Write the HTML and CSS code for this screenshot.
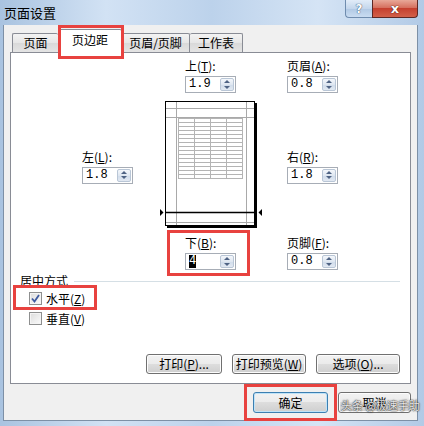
FILE: index.html
```html
<!DOCTYPE html>
<html lang="zh-CN">
<head>
    <meta charset="UTF-8">
    <title>页面设置</title>
    <link rel="stylesheet" href="styles.css">
</head>
<body>
    <div class="window">
        <div class="titlebar">
            <span class="title">页面设置</span>
            <div class="caption">
                <span class="cap-btn help">?</span>
                <span class="cap-btn close">x</span>
            </div>
        </div>
        <div class="client">
            <div class="tabs">
                <span class="tab tab-page">页面</span>
                <span class="tab tab-margin active hl">页边距</span>
                <span class="tab tab-head">页眉/页脚</span>
                <span class="tab tab-sheet">工作表</span>
            </div>
            <div class="panel">
                <div class="margins">
                    <div class="pos-top">
                        <div class="field">
                            <span class="field-label">上(<u>T</u>):</span>
                            <div class="spin"><span class="spin-value">1.9</span><span class="spin-btns"><i class="up"></i><i class="down"></i></span></div>
                        </div>
                    </div>
                    <div class="pos-header">
                        <div class="field">
                            <span class="field-label">页眉(<u>A</u>):</span>
                            <div class="spin"><span class="spin-value">0.8</span><span class="spin-btns"><i class="up"></i><i class="down"></i></span></div>
                        </div>
                    </div>
                    <div class="pos-left">
                        <div class="field">
                            <span class="field-label">左(<u>L</u>):</span>
                            <div class="spin"><span class="spin-value">1.8</span><span class="spin-btns"><i class="up"></i><i class="down"></i></span></div>
                        </div>
                    </div>
                    <div class="pos-preview">
                        <svg width="104" height="131" viewBox="0 0 104 131">
                            <rect x="8" y="4" width="90" height="125" fill="#000"/>
                            <rect x="6.5" y="2.5" width="89" height="124" fill="#fff" stroke="#000"/>
                            <g stroke="#a9a9a9">
                                <line x1="17.5" y1="3" x2="17.5" y2="126"/>
                                <line x1="87.5" y1="3" x2="87.5" y2="126"/>
                                <line x1="7" y1="9.5" x2="95" y2="9.5"/>
                                <line x1="7" y1="18.5" x2="95" y2="18.5"/>
                                <line x1="7" y1="123.5" x2="95" y2="123.5"/>
                            </g>
                            <g stroke="#b4b4b4">
                                <line x1="19.5" y1="19" x2="19.5" y2="80"/>
                                <line x1="35.5" y1="19" x2="35.5" y2="80"/>
                                <line x1="51.5" y1="19" x2="51.5" y2="80"/>
                                <line x1="67.5" y1="19" x2="67.5" y2="80"/>
                                <line x1="83.5" y1="19" x2="83.5" y2="80"/>
                                <line x1="19" y1="19.5" x2="84" y2="19.5"/>
                                <line x1="19" y1="23.5" x2="84" y2="23.5"/>
                                <line x1="19" y1="27.5" x2="84" y2="27.5"/>
                                <line x1="19" y1="31.5" x2="84" y2="31.5"/>
                                <line x1="19" y1="35.5" x2="84" y2="35.5"/>
                                <line x1="19" y1="39.5" x2="84" y2="39.5"/>
                                <line x1="19" y1="43.5" x2="84" y2="43.5"/>
                                <line x1="19" y1="47.5" x2="84" y2="47.5"/>
                                <line x1="19" y1="51.5" x2="84" y2="51.5"/>
                                <line x1="19" y1="55.5" x2="84" y2="55.5"/>
                                <line x1="19" y1="59.5" x2="84" y2="59.5"/>
                                <line x1="19" y1="63.5" x2="84" y2="63.5"/>
                                <line x1="19" y1="67.5" x2="84" y2="67.5"/>
                                <line x1="19" y1="71.5" x2="84" y2="71.5"/>
                                <line x1="19" y1="75.5" x2="84" y2="75.5"/>
                                <line x1="19" y1="79.5" x2="84" y2="79.5"/>
                            </g>
                            <line x1="6" y1="113.5" x2="97" y2="113.5" stroke="#000" stroke-width="1.6"/>
                            <polygon points="1,110 4.5,113.5 1,117" fill="#000"/>
                            <polygon points="103,110 99.5,113.5 103,117" fill="#000"/>
                        </svg>
                    </div>
                    <div class="pos-right">
                        <div class="field">
                            <span class="field-label">右(<u>R</u>):</span>
                            <div class="spin"><span class="spin-value">1.8</span><span class="spin-btns"><i class="up"></i><i class="down"></i></span></div>
                        </div>
                    </div>
                    <div class="pos-bottom">
                        <div class="field hl">
                            <span class="field-label">下(<u>B</u>):</span>
                            <div class="spin"><span class="spin-value sel">4</span><span class="spin-btns"><i class="up"></i><i class="down"></i></span></div>
                        </div>
                    </div>
                    <div class="pos-footer">
                        <div class="field">
                            <span class="field-label">页脚(<u>F</u>):</span>
                            <div class="spin"><span class="spin-value">0.8</span><span class="spin-btns"><i class="up"></i><i class="down"></i></span></div>
                        </div>
                    </div>
                </div>

                <div class="center">
                    <div class="center-title">居中方式</div>
                    <div class="check-row hl">
                        <span class="check">
                            <svg width="9" height="9" viewBox="0 0 9 9"><path d="M1 4.5 L3.5 7.5 L8 1" fill="none" stroke="#3e5aa0" stroke-width="1.8"/></svg>
                        </span>
                        <span>水平(<u>Z</u>)</span>
                    </div>
                    <div class="check-row">
                        <span class="check"></span>
                        <span>垂直(<u>V</u>)</span>
                    </div>
                </div>

                <div class="actions">
                    <button class="btn btn-print">打印(<u>P</u>)...</button>
                    <button class="btn btn-preview">打印预览(<u>W</u>)</button>
                    <button class="btn btn-options">选项(<u>O</u>)...</button>
                </div>
            </div>
            <div class="footer">
                <button class="btn btn-ok default hl">确定</button>
                <button class="btn btn-cancel">取消</button>
                <span class="watermark">头条 @极速手助</span>
            </div>
        </div>
    </div>
</body>
</html>
```

FILE: styles.css
```css
body {
    margin: 0;
    font-family: "Noto Sans CJK SC", "Liberation Sans", sans-serif;
    font-size: 12px;
    color: #000;
}
.window {
    width: 424px;
    height: 426px;
    display: flex;
    flex-direction: column;
    background: linear-gradient(90deg, #a9c3e0 0%, #d2e2f4 25%, #bcd2eb 50%, #d5e4f5 75%, #b2cae6 100%);
    overflow: hidden;
}
.titlebar {
    height: 25px;
    display: flex;
    justify-content: space-between;
    align-items: flex-start;
    flex: none;
}
.title {
    padding: 5px 0 0 4px;
    font-size: 13px;
    line-height: 15px;
}
.caption {
    display: flex;
    margin-right: 6px;
}
.cap-btn {
    height: 18px;
    box-sizing: border-box;
    display: flex;
    align-items: center;
    justify-content: center;
    color: #fff;
    font-family: "DejaVu Sans", sans-serif;
    font-weight: bold;
}
.help {
    width: 27px;
    border: 1px solid #6f8cae;
    border-top: none;
    border-right: none;
    border-radius: 0 0 0 4px;
    background: linear-gradient(#e1ecf8, #c4d6ec 50%, #b0c8e4 51%, #c9dcf1);
    font-size: 12px;
    text-shadow: 0 0 1px #2f4a6a, 0 0 1px #2f4a6a;
}
.close {
    width: 46px;
    border: 1px solid #5d2825;
    border-top: none;
    border-radius: 0 0 4px 0;
    background: linear-gradient(#e8a898, #d6705f 45%, #c5402f 50%, #d2604a);
    font-size: 13px;
    text-shadow: 0 0 1px #4a1410, 0 0 1px #4a1410;
}
.client {
    flex: 1;
    margin: 0 6px 5px 3px;
    border: 1px solid #7d90a6;
    border-top: none;
    background: #f0f0f0;
    padding: 4px 6px 0 6px;
    display: flex;
    flex-direction: column;
}

/* tabs */
.tabs {
    height: 23px;
    display: flex;
    align-items: flex-end;
    padding-left: 2px;
    position: relative;
    z-index: 2;
}
.tab {
    height: 19px;
    box-sizing: border-box;
    border: 1px solid #898c95;
    border-bottom: none;
    border-radius: 2px 2px 0 0;
    background: linear-gradient(#f3f3f3, #e6e6e6 50%, #d9d9d9 51%, #e4e4e4);
    display: flex;
    align-items: center;
    justify-content: center;
    line-height: 14px;
    position: relative;
}
.tab-page { width: 46px; border-right: none; }
.tab-margin { width: 64px; }
.tab-head { width: 68px; border-left: none; }
.tab-sheet { width: 53px; border-left: none; }
.tab.active {
    height: 24px;
    margin-bottom: -1px;
    background: #fff;
    padding-bottom: 3px;
}

.panel {
    height: 332px;
    box-sizing: border-box;
    border: 1px solid #898c95;
    background: #fff;
    padding-top: 6px;
    display: flex;
    flex-direction: column;
}

/* margin fields */
.margins {
    display: grid;
    grid-template-columns: 77px 128px 60px;
    grid-template-rows: 34px 131px 34px;
    row-gap: 6px;
    margin-left: 71px;
}
.pos-top { grid-column: 2; grid-row: 1; padding-left: 26px; }
.pos-header { grid-column: 3; grid-row: 1; }
.pos-left { grid-column: 1; grid-row: 2; align-self: center; margin-top: 4px; }
.pos-preview { grid-column: 2; grid-row: 2; }
.pos-preview svg { display: block; }
.pos-right { grid-column: 3; grid-row: 2; align-self: center; margin-top: 4px; }
.pos-bottom { grid-column: 2; grid-row: 3; padding-left: 26px; }
.pos-footer { grid-column: 3; grid-row: 3; }

.field {
    width: 51px;
    display: flex;
    flex-direction: column;
    gap: 3px;
    position: relative;
}
.field-label {
    line-height: 14px;
    white-space: nowrap;
}
.spin {
    height: 17px;
    box-sizing: border-box;
    border: 1px solid #a7adb6;
    display: flex;
    align-items: center;
    justify-content: space-between;
    padding: 0 1px 0 3px;
    background: #fff;
}
.spin-value {
    font-family: "Liberation Mono", monospace;
    font-size: 12px;
    line-height: 13px;
}
.spin-value.sel {
    background: #000;
    color: #fff;
}
.spin-btns {
    width: 14px;
    height: 13px;
    box-sizing: border-box;
    display: flex;
    flex-direction: column;
    border: 1px solid #b9c6d6;
    border-radius: 2px;
    background: linear-gradient(#f4f7fb, #dfe7f1 50%, #cfdbea 51%, #e2e9f2);
}
.spin-btns i {
    flex: 1;
    display: flex;
    align-items: center;
    justify-content: center;
}
.spin-btns i::before {
    content: "";
    border-left: 3px solid transparent;
    border-right: 3px solid transparent;
}
.spin-btns .up::before { border-bottom: 3px solid #4f6384; }
.spin-btns .down::before { border-top: 3px solid #4f6384; }

/* center on page */
.center {
    margin: 4px 10px 0 9px;
}
.center-title {
    display: flex;
    align-items: center;
    line-height: 14px;
}
.center-title::after {
    content: "";
    flex: 1;
    border-top: 1px solid #d5dfe5;
    margin-left: 6px;
}
.check-row {
    height: 20px;
    display: flex;
    align-items: center;
    gap: 4px;
    padding-left: 9px;
    width: max-content;
    position: relative;
}
.check {
    width: 13px;
    height: 13px;
    box-sizing: border-box;
    border: 1px solid #8e8f8f;
    background: linear-gradient(135deg, #dcdcdc, #fbfbfb);
    box-shadow: inset 0 0 0 1px #f4f4f4;
    display: flex;
    align-items: center;
    justify-content: center;
}
.check svg { display: block; }

/* buttons */
.btn {
    height: 21px;
    box-sizing: border-box;
    border: 1px solid #707070;
    border-radius: 3px;
    background: linear-gradient(#f2f2f2, #ebebeb 49%, #dddddd 50%, #cfcfcf);
    box-shadow: inset 0 0 0 1px #fcfcfc;
    font-family: "Noto Sans CJK SC", "Liberation Sans", sans-serif;
    font-size: 12px;
    line-height: 14px;
    padding: 0;
    color: #000;
}
.actions {
    display: flex;
    justify-content: flex-end;
    gap: 10px;
    margin-top: 26px;
    padding-right: 10px;
}
.actions .btn { height: 20px; }
.btn-print { width: 76px; }
.btn-preview { width: 74px; }
.btn-options { width: 84px; }

.footer {
    display: flex;
    justify-content: flex-end;
    gap: 10px;
    margin-top: 8px;
    position: relative;
}
.btn-ok { width: 75px; }
.btn-cancel { width: 73px; }
.btn.default {
    border-color: #3c7fb1;
    box-shadow: inset 0 0 0 1px #bfe3f8;
}
.watermark {
    position: absolute;
    left: 331px;
    top: 6px;
    color: rgba(255, 255, 255, 0.9);
    font-size: 11px;
    line-height: 14px;
    text-shadow: 0 0 2px #333, 0 0 1px #000;
    white-space: nowrap;
}

/* red annotation boxes */
.hl::after {
    content: "";
    position: absolute;
    border: 3px solid #e8423f;
    box-sizing: border-box;
    z-index: 5;
    pointer-events: none;
}
.tab.hl::after { left: -1px; top: -5px; width: 66px; height: 34px; }
.field.hl::after { left: -18px; top: -6px; width: 83px; height: 46px; }
.check-row.hl::after { left: -7px; top: -3px; width: 84px; height: 25px; }
.btn.hl { position: relative; }
.btn.hl::after { left: -10px; top: -9px; width: 93px; height: 37px; }
```
